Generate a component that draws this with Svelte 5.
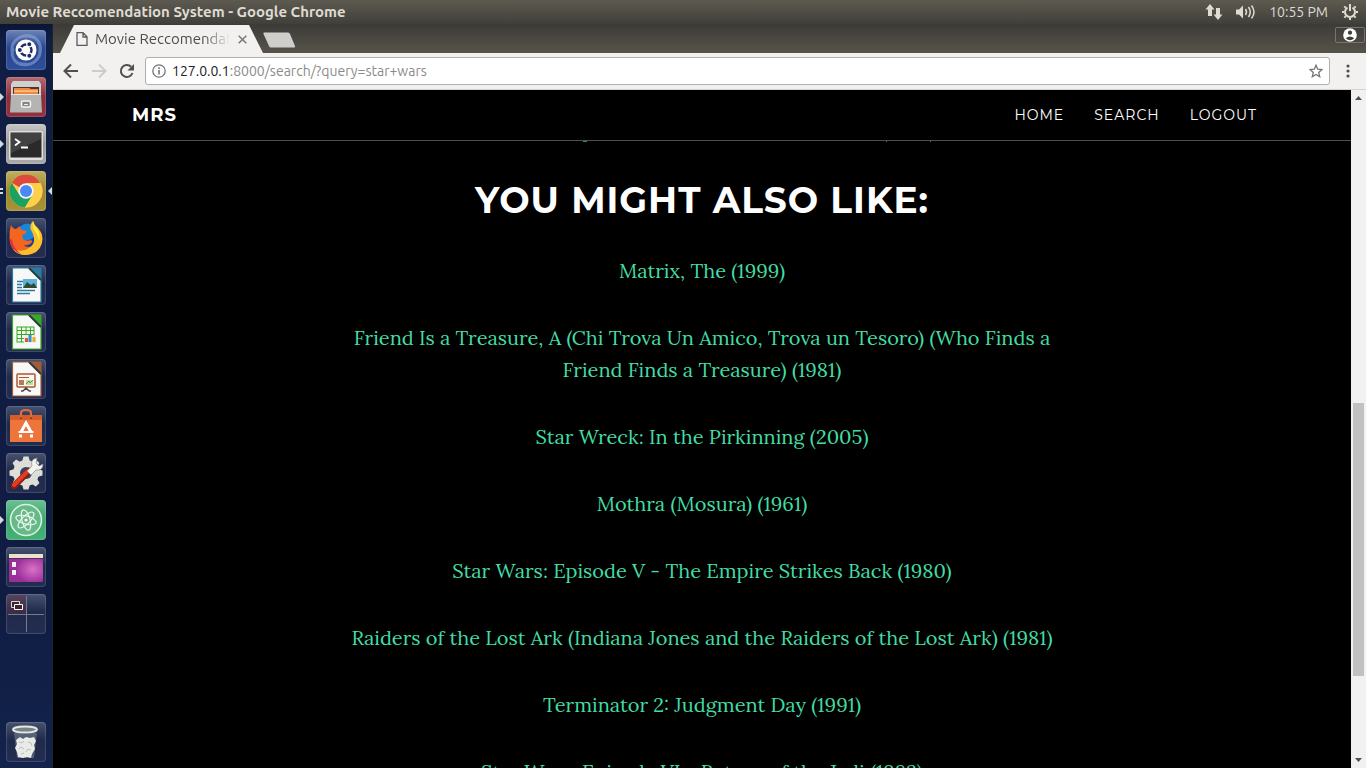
<script>
  const movies = [
    'Matrix, The (1999)',
    'Friend Is a Treasure, A (Chi Trova Un Amico, Trova un Tesoro) (Who Finds a Friend Finds a Treasure) (1981)',
    'Star Wreck: In the Pirkinning (2005)',
    'Mothra (Mosura) (1961)',
    'Star Wars: Episode V - The Empire Strikes Back (1980)',
    'Raiders of the Lost Ark (Indiana Jones and the Raiders of the Lost Ark) (1981)',
    'Terminator 2: Judgment Day (1991)',
    'Star Wars: Episode VI - Return of the Jedi (1983)'
  ];
  const pages = ['Home', 'Search', 'Logout'];
  const launchers = [
    { id: 'dash', tint: 'blue' },
    { id: 'files', tint: 'red', running: 1 },
    { id: 'terminal', tint: 'gray', running: 1 },
    { id: 'chrome', tint: 'gold', running: 2, focused: true },
    { id: 'firefox', tint: 'glass' },
    { id: 'writer', tint: 'glass' },
    { id: 'calc', tint: 'glass' },
    { id: 'impress', tint: 'glass' },
    { id: 'software', tint: 'glass' },
    { id: 'settings', tint: 'glass' },
    { id: 'atom', tint: 'green', running: 1 },
    { id: 'window', tint: 'glass' },
    { id: 'workspaces', tint: 'glass' },
    { id: 'trash', tint: 'glass', last: true }
  ];
  const spokes = [0, 45, 90, 135, 180, 225, 270, 315];
  let address = $state('127.0.0.1:8000/search/?query=star+wars');
  let host = $derived(address.split(':')[0]);
  let rest = $derived(address.slice(host.length));
</script>

<div class="desktop">
  <header class="panel">
    <span class="title">Movie Reccomendation System - Google Chrome</span>
    <div class="tray">
      <svg width="18" height="18" viewBox="0 0 18 18" fill="#dfdbd2"><path d="M5 1 .500 6.500H3V13h4V6.500h2.500zM13 17l4.500-5.500H15V5h-4v6.500H8.500z"/></svg>
      <svg width="20" height="16" viewBox="0 0 20 16" fill="none" stroke="#dfdbd2" stroke-width="1.500"><path fill="#dfdbd2" stroke="none" d="M0 5.500h3l4-4v13l-4-4H0z"/><path d="M9.500 5q2 3 0 6M12.500 3q3.500 5 0 10"/><path d="M15.500 1.500q5 6.500 0 13"/></svg>
      <time>10:55 PM</time>
      <svg width="18" height="18" viewBox="0 0 18 18" fill="none" stroke="#dfdbd2"><path stroke-width="2" d="M6.500 4.700a5 5 0 1 0 5 0M9 1v7"/>{#each spokes.slice(1) as a}<path stroke-width="2" d="M9 3V1" transform="rotate({a} 9 9)"/>{/each}</svg>
    </div>
  </header>

  <div class="workspace">
    <nav class="launcher" aria-label="Launcher">
      {#each launchers as app}
        <button class="app {app.tint}" class:last={app.last} aria-label={app.id}>
          {#if app.running === 1}<i class="pip"></i>{/if}
          {#if app.running === 2}<i class="pip double"></i>{/if}
          {#if app.focused}<i class="pip focus"></i>{/if}
          <svg width="40" height="40" viewBox="0 0 40 40">
            {#if app.id === 'dash'}
              <g fill="none" stroke="#9cb2e0" stroke-width="3" opacity=".5"><path d="M6 21C5 9 18 2 29 8"/><path d="M34 17c2 12-8 20-20 17"/><path d="M18 6c12-2 18 7 16 17M21 34C10 36 4 28 7 18"/></g>
              <circle cx="20" cy="20" r="10.500" fill="#fff"/>
              <circle cx="20" cy="20" r="5.500" fill="none" stroke="#1b2f66" stroke-width="2.500"/>
              <g stroke="#fff" stroke-width="1.200" fill="#1b2f66"><circle cx="13.800" cy="20" r="2.600"/><circle cx="23.300" cy="14.300" r="2.600"/><circle cx="23.300" cy="25.700" r="2.600"/></g>
            {:else if app.id === 'files'}
              <path d="M7 4h26l2 3v10H5V7z" fill="#cfcfcd"/><path d="M7 10h26v7H7z" fill="#4a3832"/><path d="M8 11h15l2 1h7v5H8z" fill="#f0873a"/><path d="M8 13.500h24v1.200H8z" fill="#ffd3a5"/>
              <path d="M5 17h30l1 18.500H4z" fill="#b4b4b2"/><path d="M5 17.500h30" stroke="#e6e6e6"/>
              <rect x="15.500" y="24" width="9" height="6" rx="1.500" fill="#888" stroke="#f4f4f4" stroke-width="1.500"/><path d="M18 27.500h4" stroke="#eee"/>
            {:else if app.id === 'terminal'}
              <rect x="3" y="7" width="34" height="29" rx="2" fill="#e0e0de"/><rect x="4.500" y="8.500" width="31" height="25" fill="#2a2a2a"/><path d="M5 9h30v6L5 29z" fill="#414141"/>
              <path d="m9 15 4.500 3L9 21.500M15 23.500h7" fill="none" stroke="#fff" stroke-width="1.800"/>
            {:else if app.id === 'chrome'}
              <circle cx="20" cy="20" r="16.500" fill="#fc4"/><path d="M20 20 5.700 11.800A16.500 16.500 0 0 1 34.300 11.800L27 12.500z" fill="#dd4b3e"/><path d="M5.700 11.800A16.500 16.500 0 0 0 19 36.500L26.500 24 13.500 24z" fill="#1ba261"/><path d="M20 12h14.400A16.500 16.500 0 0 1 19 36.500l8-13z" fill="#fdcf4b"/>
              <circle cx="20" cy="20" r="7.700" fill="#f5f5f5"/><circle cx="20" cy="20" r="6" fill="#4a89f3"/>
            {:else if app.id === 'firefox'}
              <circle cx="20" cy="20" r="14.500" fill="#1b3e9c"/><circle cx="21" cy="14" r="8.500" fill="#1787d6"/>
              <path d="M5 7q2 4 5 4l4-3q0 3 2 4l5 1q-1 3-5 4l1 4q4 3 8 1 2 1 1 2-3 4-9 3 6 4 11 0 6-5 3-13l5 2q2 18-15 21Q4 36 3.500 20 3 13 5 7z" fill="#f4661e"/>
              <path d="M27 3q1 4 5 7 6 7 4 15-3 11-16 12-9 0-13-6 9 4 16-1 6-4 5-10-1-5-3-8-2-5 2-9z" fill="#fdbe2b"/><path d="M27 3q1 5 4 8 4 6 2 12-1-7-5-11-2-5-1-9z" fill="#fff14d"/><path d="M3.500 20Q4 32 15 36q-8-6-9-14z" fill="#e5264e"/>
            {:else if app.id === 'writer' || app.id === 'calc' || app.id === 'impress'}
              {@const ink = app.id === 'writer' ? '#277ba5' : app.id === 'calc' ? '#3ba629' : '#a35a36'}
              <path d="M6.500 3h19l9.500 10v24H6.500z" fill="#f8f8f6" stroke={ink} stroke-width="1.200"/><path d="M23 2.500h12.500V15z" fill={ink}/><path d="M23 3 35 15" stroke="#263a36" stroke-width="2"/>
              {#if app.id === 'writer'}
                <path d="M11 16.500h8M11 19.500h5M11 22.500h5M11 25.500h18M11 28.500h13" stroke={ink} stroke-width="1.500"/><rect x="17" y="14" width="14" height="9" fill="#5bb3da"/><path d="m17 23 4-6 4 3 3-2 3 5z" fill="#304a35"/>
              {:else if app.id === 'calc'}
                <rect x="11" y="15" width="17" height="15" fill="#f1fbe9" stroke={ink}/><path d="M11 18.500h17M11 22.500h17M11 26.500h17M15.500 15v15M20 15v15M24.500 15v15" stroke={ink}/><rect x="18" y="23" width="12" height="8" fill="#eee"/><path d="M19 30v-4h3v4z" fill="#e05a2a"/><path d="M22.500 30v-7h3v7z" fill="#318fd0"/><path d="M26.500 30v-5h3v5z" fill="#e6ad28"/>
              {:else}
                <rect x="11" y="15" width="18" height="13" rx="1" fill="#fff5ec" stroke={ink} stroke-width="1.500"/><path d="M13 18.500h10" stroke={ink}/><path d="M13 21h5v5h-5z" fill="#c07754"/><path d="M20 21h7v5h-7z" fill="#c1dfa5"/><path d="m20 25 3-3 1 2 3-3" fill="none" stroke="#479b40"/><path d="m17 32 3-3 3 3M15 32h2M23 32h2" fill="none" stroke="#444" stroke-width="1.500"/>
              {/if}
            {:else if app.id === 'software'}
              <path d="M4 9h32v27H4z" fill="#ed743b"/><path d="M4 9h32v5H4z" fill="#d65d2b"/><path d="M15 12V7q0-3 5-3t5 3v5" fill="none" stroke="#df6c42" stroke-width="2.200"/><circle cx="15" cy="12" r="1" fill="#813713"/><circle cx="25" cy="12" r="1" fill="#813713"/>
              <path d="m15 26 5-9 5 9M13 30h3M24 30h3" fill="none" stroke="#fff" stroke-width="3"/><path d="M12.500 26h15" stroke="#fff" stroke-width="2"/>
            {:else if app.id === 'settings'}
              <g fill="#deded9">{#each spokes as a}<path d="m16 9 1.500-5.500h5L24 9z" transform="rotate({a} 20 20)"/>{/each}<circle cx="20" cy="20" r="13"/></g><circle cx="20" cy="20" r="6" fill="#37415e"/>
              <path d="M8 33 23 18" stroke="#8d1c12" stroke-width="6.500" stroke-linecap="round"/><path d="m8 32 14-14" stroke="#e43b23" stroke-width="4" stroke-linecap="round"/><path d="m21 18 5-5q-2-7 5-8l-1 5 3 3 4-2q0 7-7 6l-5 5z" fill="#f3f3f0" stroke="#8c8c87" stroke-width=".7"/>
            {:else if app.id === 'atom'}
              <circle cx="20" cy="20" r="15.500" fill="#68b98a" stroke="#d9f3e3" stroke-width="1.600"/><g fill="none" stroke="#e5f6ea" stroke-width="1.200">{#each [15, 75, 135] as a}<ellipse cx="20" cy="20" rx="10.500" ry="4" transform="rotate({a} 20 20)"/>{/each}</g><circle cx="20" cy="20" r="1.600" fill="#fff"/>
            {:else if app.id === 'window'}
              <defs><radialGradient id="plum" cx=".7" cy=".55"><stop stop-color="#d972c4"/><stop offset="1" stop-color="#9b2f9a"/></radialGradient></defs>
              <rect x="3" y="7" width="34" height="28" rx="1" fill="url(#plum)"/><path d="M3 7h34v4H3z" fill="#e8e3cf"/><path d="M3 11.500h34" stroke="#5f285e"/><path d="M6 15h4v5H6zM6 23h4v5H6z" fill="#f5edf4"/>
            {:else if app.id === 'workspaces'}
              <path d="M1 1h19v19H1z" fill="#6d2f3e" opacity=".4"/><path d="M20.500 2v36M2 20.500h36" stroke="#727b93"/><g fill="#3c2431" stroke="#ddd"><path d="M5.500 7.500h8v6h-8z"/><path stroke="#fff" d="M8.500 10.500h8v5h-8z"/></g>
            {:else}
              <ellipse cx="19" cy="7.500" rx="12" ry="3" fill="#788482" stroke="#e4e7e5" stroke-width="2"/><path d="m8 11 3 25h17l3-25z" fill="#9ba4ad" opacity=".4"/><path d="m10 18 4-3 3 2 3-2 4 1 4-1 2 4-2 4 1 4-3 5-1 4-4-1-4 1-5-1-1-5-2-4 2-4z" fill="#e9ebe9"/><path d="m13 20 3 1 2-2M22 20l3 1 1 3M13 27l2-2 3 2M20 30l2-3 3 1M15 32l3-1" fill="none" stroke="#b9bfbe"/>
            {/if}
          </svg>
        </button>
      {/each}
    </nav>

    <section class="browser">
      <div class="tabs">
        <div class="tab">
          <svg class="doc" width="12" height="14" viewBox="0 0 12 14" fill="none" stroke="#5a5a5a" stroke-width="1.300"><path d="M1 .700h6l4 4v8.600H1zM7 1v4h4"/></svg>
          <span class="tabname">Movie Reccomendation System</span>
          <button class="close" aria-label="Close tab"><svg width="9" height="9" viewBox="0 0 9 9" stroke="#777" stroke-width="1.500"><path d="m.7.7 7.600 7.600M8.300.7.7 8.300"/></svg></button>
        </div>
        <button class="newtab" aria-label="New tab"><svg width="33" height="16" viewBox="0 0 33 16"><path d="M1 .5h24q1.500 0 2 1.500l5 12q.5 1.500-1 1.500H8q-1.500 0-2-1.500L.500 2Q0 .5 1 .5z" fill="#d0cecb"/></svg></button>
        <button class="profile" aria-label="Profile"><svg width="14" height="14" viewBox="0 0 14 14"><circle cx="7" cy="7" r="6.800" fill="#fff"/><circle cx="7" cy="4.700" r="2.100" fill="#3f3e39"/><path d="M2.800 10.200q4.200-3.500 8.400 0-4.200 4-8.400 0z" fill="#3f3e39"/></svg></button>
      </div>

      <div class="toolbar">
        <button aria-label="Back"><svg width="16" height="16" viewBox="0 0 16 16" fill="none" stroke="#505050" stroke-width="2"><path d="M15 8H2M8 1.500 1.500 8 8 14.500"/></svg></button>
        <button aria-label="Forward"><svg width="16" height="16" viewBox="0 0 16 16" fill="none" stroke="#ccc" stroke-width="2"><path d="M1 8h13M8 1.500 14.500 8 8 14.500"/></svg></button>
        <button aria-label="Reload"><svg width="16" height="16" viewBox="0 0 16 16"><path d="M13.500 10A6 6 0 1 1 12.200 3.800" fill="none" stroke="#505050" stroke-width="2"/><path d="M15 1v6.500H8.500z" fill="#505050"/></svg></button>
        <div class="address">
          <svg width="14" height="14" viewBox="0 0 14 14" fill="none" stroke="#757575" stroke-width="1.300"><circle cx="7" cy="7" r="6.200"/><path stroke-width="1.600" d="M7 6v4.500M7 3.300V5"/></svg>
          <div class="url">
            <span aria-hidden="true"><b>{host}</b>{rest}</span>
            <input aria-label="Address" bind:value={address} spellcheck="false" />
          </div>
          <button class="star" aria-label="Bookmark"><svg width="14" height="14" viewBox="0 0 14 14" fill="none" stroke="#757575" stroke-width="1.300"><path d="m7 1.200 1.700 4 4.300.4-3.300 2.800 1 4.300L7 10.400l-3.700 2.300 1-4.300L1 5.600l4.300-.4z"/></svg></button>
        </div>
        <button class="menu" aria-label="Menu"><svg width="4" height="14" viewBox="0 0 4 14" fill="#505050"><circle cx="2" cy="2" r="1.600"/><circle cx="2" cy="7" r="1.600"/><circle cx="2" cy="12" r="1.600"/></svg></button>
      </div>

      <div class="viewport">
        <div class="page">
          <nav class="sitebar">
            <div class="container">
              <a class="brand" href="#top">MRS</a>
              <div class="links">{#each pages as p}<a href="#{p.toLowerCase()}">{p}</a>{/each}</div>
            </div>
          </nav>
          <main>
            <div class="scrolled"><i class="wide"></i><i class="push"></i><i></i></div>
            <h2>You might also like:</h2>
            {#each movies as movie}<p><a href="#movie">{movie}</a></p>{/each}
          </main>
        </div>
        <div class="scrollbar">
          <svg width="15" height="15" viewBox="0 0 15 15"><path d="m4 10 3.500-4L11 10z" fill="#505050"/></svg>
          <div class="before"></div>
          <div class="thumb"></div>
          <div class="after"></div>
          <svg width="15" height="15" viewBox="0 0 15 15"><path d="m4 5 3.500 4L11 5z" fill="#505050"/></svg>
        </div>
      </div>
    </section>
  </div>
</div>

<style>
  :global(body) { margin: 0; }
  .desktop { height: 100vh; display: flex; flex-direction: column; overflow: hidden; font: 14px/20px Ubuntu, "Noto Sans", sans-serif; background: #000; }
  button { border: 0; padding: 0; margin: 0; background: none; display: flex; align-items: center; justify-content: center; flex: none; }
  a { text-decoration: none; }
  svg { display: block; flex: none; }

  .panel { height: 24px; flex: none; display: flex; align-items: center; justify-content: space-between; padding: 0 7px 0 6px; background: linear-gradient(#5d5a50, #403f3a); color: #dfdbd2; }
  .title { font-size: 15px; font-weight: 700; }
  .tray { display: flex; align-items: center; gap: 13px; }

  .workspace { flex: 1; min-height: 0; display: flex; }
  .launcher { width: 53px; flex: none; box-sizing: border-box; padding: 6px; display: flex; flex-direction: column; gap: 7px; background: linear-gradient(#0b1636, #111e44 20px, #101c42 580px, #13234d); border-right: 1px solid #1c2333; }
  .app { position: relative; width: 40px; height: 40px; border-radius: 4px; box-shadow: inset 0 0 1px 1px rgba(255, 255, 255, .15); }
  .app.last { margin-top: auto; }
  .blue { background: linear-gradient(#6c83b9, #29478f 45%, #2e4f9b); }
  .red { background: linear-gradient(#b26a73, #8b2e3c 50%, #94303e); }
  .gray { background: linear-gradient(#c6c6c6, #999 50%, #aaa); }
  .gold { background: linear-gradient(#c0b060, #9a8730 50%, #a9933a); }
  .green { background: linear-gradient(#6cc093, #3ea56d 50%, #45b277); }
  .glass { background: linear-gradient(#46526f, #1f2a4b 45%, #222d50); }
  .pip { position: absolute; left: -6px; top: 16px; border: 4px solid transparent; border-left-color: #d5d8df; border-right: 0; }
  .double { top: 17px; width: 3px; height: 2px; border: solid #d5d8df; border-width: 2px 0; }
  .focus { left: auto; right: -6px; border-left: 0; border-right: 4px solid #d5d8df; }

  .browser { flex: 1; min-width: 0; display: flex; flex-direction: column; }
  .tabs { height: 29px; flex: none; display: flex; align-items: center; padding-left: 7px; background: linear-gradient(#3c3b37, #56534a); }
  .tab { align-self: flex-end; box-sizing: border-box; width: 203px; height: 28px; display: flex; align-items: center; padding: 0 16px; background: #f2f1f0; clip-path: polygon(0 100%, 10px 8px, 14px 0, 189px 0, 193px 8px, 100% 100%); }
  .tabname { flex: 1; margin: 0 8px 0 7px; overflow: hidden; white-space: nowrap; font-size: 15px; color: #4c4c4c; mask-image: linear-gradient(90deg, #000 80%, transparent); }
  .newtab { margin-top: 2px; }
  .profile { align-self: flex-start; margin: 3px 1px 0 auto; width: 30px; height: 16px; box-sizing: border-box; border: 1px solid #77756e; border-radius: 2px; }

  .toolbar { height: 37px; flex: none; box-sizing: border-box; display: flex; align-items: center; gap: 12px; padding: 0 16px 0 10px; background: #f2f1f0; border-bottom: 1px solid #d4d3d1; }
  .address { flex: 1; min-width: 0; height: 28px; box-sizing: border-box; display: flex; align-items: center; gap: 6px; margin: 0 4px 0 -2px; padding: 0 6px; border: 1px solid #b0afad; border-radius: 3px; background: #fff; }
  .url { flex: 1; display: grid; color: #8a8a8a; }
  .url > * { grid-area: 1 / 1; }
  .url b { font-weight: 400; color: #222; }
  .url input { border: 0; padding: 0; font: inherit; color: transparent; background: none; outline: 0; min-width: 0; }

  .viewport { flex: 1; min-height: 0; display: flex; }
  .page { flex: 1; min-width: 0; display: flex; flex-direction: column; overflow: hidden; background: #000; }
  .sitebar { flex: none; border-bottom: 1px solid #4d4d4d; }
  .container { max-width: 1170px; height: 50px; margin: 0 auto; box-sizing: border-box; padding: 0 15px; display: flex; align-items: center; justify-content: space-between; font-family: Montserrat, Inter, sans-serif; text-transform: uppercase; }
  .container a { color: #fff; }
  .brand { font-size: 18px; font-weight: 700; letter-spacing: 1px; }
  .links { display: flex; gap: 30px; padding-right: 15px; letter-spacing: 1px; }
  main { width: 750px; max-width: 100%; margin: 0 auto; text-align: center; }
  .scrolled { width: 348px; height: 1px; margin: 0 0 38px 256px; display: flex; }
  .scrolled i { width: 1px; background: #2b8f69; }
  .scrolled .wide { width: 4px; }
  .scrolled .push { margin: 0 43px 0 auto; }
  h2 { margin: 0 0 35px; font: 700 36px/40px Montserrat, Inter, sans-serif; letter-spacing: 1px; text-transform: uppercase; color: #fff; }
  p { margin: 0 0 35px; font: 20px/32px Lora, "Liberation Serif", serif; }
  p a { color: #42dca3; }

  .scrollbar { width: 15px; flex: none; display: flex; flex-direction: column; background: #f1f1f1; }
  .before { flex: 298; }
  .thumb { flex: 273; margin: 0 2px; background: #c1c1c1; }
  .after { flex: 77; }
</style>
